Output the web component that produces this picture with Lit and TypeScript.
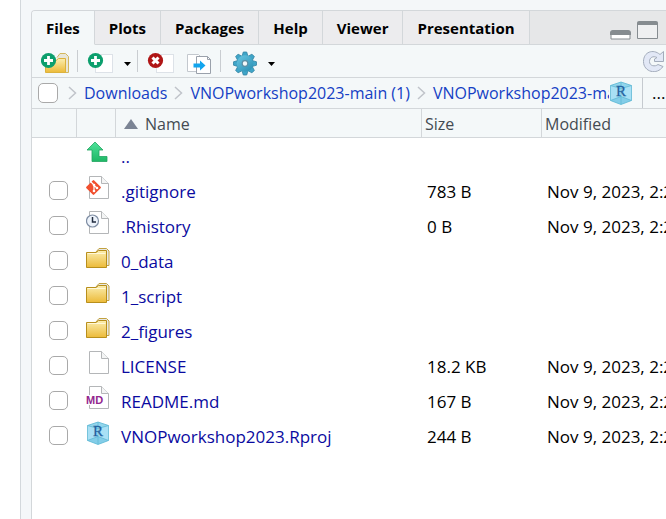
import { LitElement, html, css, svg, nothing } from "lit";
import { customElement, state } from "lit/decorators.js";
import { classMap } from "lit/directives/class-map.js";

type Kind = "git" | "history" | "folder" | "file" | "markdown" | "project";

interface Entry {
  name: string;
  kind: Kind;
  size?: string;
  modified?: string;
}

const STAMP = "Nov 9, 2023, 2:22";

const ENTRIES: Entry[] = [
  { name: ".gitignore", kind: "git", size: "783 B", modified: STAMP },
  { name: ".Rhistory", kind: "history", size: "0 B", modified: STAMP },
  { name: "0_data", kind: "folder" },
  { name: "1_script", kind: "folder" },
  { name: "2_figures", kind: "folder" },
  { name: "LICENSE", kind: "file", size: "18.2 KB", modified: STAMP },
  { name: "README.md", kind: "markdown", size: "167 B", modified: STAMP },
  { name: "VNOPworkshop2023.Rproj", kind: "project", size: "244 B", modified: STAMP },
];

const TABS = ["Files", "Plots", "Packages", "Help", "Viewer", "Presentation"];
const CRUMBS = ["Downloads", "VNOPworkshop2023-main (1)", "VNOPworkshop2023-main"];

const defs = svg`<defs>
  <linearGradient id="gold" x1="0" y1="0" x2="0" y2="1">
    <stop offset="0" stop-color="#fbeeb0"/><stop offset="1" stop-color="#ecba38"/>
  </linearGradient>
  <linearGradient id="leaf" x1="0" y1="0" x2="0" y2="1">
    <stop offset="0" stop-color="#4ee29a"/><stop offset="1" stop-color="#1fb766"/>
  </linearGradient>
</defs>`;

const page = svg`
  <path d="M3.5 .5H15.5L22.5 7.5V22.5H3.5Z" fill="#fff" stroke="#b4b6b8"/>
  <path d="M15.5 .5V7.5H22.5" fill="#f4f5f5" stroke="#b4b6b8"/>`;

const cube = svg`
  <path d="M12 1L22.5 4.5V19.5L12 23.5L1.5 19.5V4.5Z" fill="#a9e0f5"/>
  <path d="M12 1L22.5 4.5L12 7.5L1.5 4.5Z" fill="#92d5ec"/>
  <path d="M1.5 19.5L12 15.5L22.5 19.5L12 23.5Z" fill="#83cde8"/>
  <path d="M12 1L22.5 4.5V19.5L12 23.5L1.5 19.5V4.5ZM1.5 4.5L12 7.5L22.5 4.5M12 1V23M1.5 19.5L12 15.5L22.5 19.5" fill="none" stroke="#5fb9d4" stroke-width=".8"/>
  <text x="12" y="15" text-anchor="middle" font-family="Liberation Serif, serif" font-size="15" fill="#23619e" stroke="#23619e" stroke-width=".3">R</text>`;

const folder = svg`${defs}
  <path d="M9.5 6.5L13 2.5H20.5L23 5V19.5H20" fill="#e6e8e6" stroke="#c3a23f"/>
  <path d="M.5 6.5H10L12.5 4.5H20.5V21.5H.5Z" fill="url(#gold)" stroke="#b88f1c"/>
  <path d="M1.5 7.5H19.5" stroke="#fff8d8" />`;

const glyphs: Record<Kind, unknown> = {
  file: page,
  folder,
  project: cube,
  git: svg`${page}
    <rect x="2" y="6" width="11" height="11" rx="1" transform="rotate(45 7.5 11.5)" fill="#f1502f"/>
    <path d="M5 6L8 9V15M8 9.5L11 12" fill="none" stroke="#fff" stroke-width="1.2"/>
    <circle cx="8" cy="9" r="1.3" fill="#fff"/><circle cx="8" cy="15" r="1.3" fill="#fff"/><circle cx="11" cy="12" r="1.3" fill="#fff"/>`,
  history: svg`${page}
    <circle cx="6.5" cy="10" r="6" fill="#edf3fb" stroke="#7e8da3" stroke-width="1.2"/>
    <path d="M6.5 6V11H10" fill="none" stroke="#222d40" stroke-width="1.5"/>`,
  markdown: svg`${page}
    <rect x="0" y="9" width="17" height="10" fill="#fff"/>
    <text x="0" y="18" font-family="Liberation Sans, sans-serif" font-weight="700" font-size="11" fill="#93278f">MD</text>`,
};

const icon = (w: number, h: number, body: unknown) =>
  html`<svg width=${w} height=${h} viewBox="0 0 ${w} ${h}" aria-hidden="true">${body}</svg>`;

const plus = (cx: number) => svg`
  <circle cx=${cx} cy="15.5" r="7.6" fill="#0c9f6d"/>
  <path d="M${cx - 4.5} 15.5H${cx + 4.5}M${cx} 11V20" stroke="#fff" stroke-width="2.8"/>`;

const newFolder = svg`${defs}
  <path d="M16 12.5L19 8.5H24.5L27.5 11.5V27.5H24" fill="#e8e6d8" stroke="#d3b75e"/>
  <path d="M4.5 15.5H15L17.5 13.5H24.5V27.5H4.5Z" fill="url(#gold)" stroke="#dcb23c"/>
  ${plus(7.5)}`;

const newFile = svg`
  <rect x="11.5" y="9.5" width="17" height="18" fill="#fff" stroke="#dde2e8"/>${plus(11.5)}`;

const remove = svg`
  <rect x="12.5" y="9.5" width="17" height="18" fill="#fff" stroke="#dde2e8"/>
  <circle cx="11.5" cy="15.5" r="7.6" fill="#b01616"/>
  <path d="M8.5 12.5L14.5 18.5M14.5 12.5L8.5 18.5" stroke="#fff" stroke-width="3"/>`;

const copyTo = svg`
  <path d="M1.5 9.5H12.5L15.5 12.5V26.5H1.5Z" fill="#fff" stroke="#c3c8ce"/>
  <path d="M10.5 11.5H21.5L24.5 14.5V28.5H10.5Z" fill="#fff" stroke="#9aa1ab"/>
  <path d="M21.5 11.5V14.5H24.5" fill="none" stroke="#9aa1ab"/>
  <path d="M7.5 18.5H14V15.5L19.5 20.5L14 25.5V22.5H7.5Z" fill="#12a5ee"/>`;

const TEETH = [0, 45, 90, 135, 180, 225, 270, 315];
const gear = svg`
  <defs><linearGradient id="teal" gradientUnits="userSpaceOnUse" x1="10" y1="8" x2="26" y2="29">
    <stop offset="0" stop-color="#6fcbe6"/><stop offset="1" stop-color="#2389ae"/>
  </linearGradient></defs>
  ${TEETH.map(
    (a) => svg`<path d="M14.8 12L16.3 7H19.7L21.2 12Z" transform="rotate(${a} 18 18.5)" fill="#3fa5c8" stroke="#3384a3" stroke-width=".8" stroke-linejoin="round"/>`
  )}
  <circle cx="18" cy="18.5" r="8.3" fill="url(#teal)"/>
  <circle cx="18" cy="18.5" r="2.8" fill="#f4f8f9" stroke="#5d8fa4" stroke-width="1.2"/>`;

const caret = svg`<path d="M0 17H7L3.5 21Z" fill="#000"/>`;

const refresh = svg`
  <path d="M20.5 1.5V11.5H11.5V9L14 7.5C10 5.5 6.5 7.5 6.5 11.5C6.5 16 12 17 15 14.5L20 16.5C14 25.5 .5 22 .5 11.5C.5 2 10 -1.5 17 4.5Z" fill="#e2e8f6" stroke="#a3acbb" stroke-linejoin="round"/>`;

const minimize = svg`<path d="M1 19V13Q1 11 3 11H18Q20 11 20 13V19Z" fill="#fff" stroke="#868c90" stroke-width="1"/>
  <path d="M0 15V13Q0 10 3 10H18Q21 10 21 13V15Z" fill="#868c90"/>`;

const maximize = svg`<path d="M.5 3V18.5H20.5V3Z" fill="#eff0f1" stroke="#868c90"/>
  <path d="M0 5V3Q0 1 2 1H19Q21 1 21 3V5Z" fill="#868c90"/>`;

const chevron = icon(9, 14, svg`<path d="M1 1L7.5 7L1 13" fill="none" stroke="#c0c4ca" stroke-width="1.5"/>`);

const upArrow = svg`${defs}
  <path d="M9 1L17 9H13V15.5H21V20.5H6V9H1Z" fill="url(#leaf)" stroke="#22a561" stroke-width=".8"/>`;

@customElement("app-root")
export class AppRoot extends LitElement {
  @state() private tab = "Files";
  @state() private selected = new Set<string>();

  static styles = css`
    :host {
      display: flex;
      min-height: 100vh;
      overflow: hidden;
      background: #fff;
      color: #000;
      font: 17px/24px "Open Sans", "Noto Sans", sans-serif;
      padding-left: 20px;
      box-sizing: border-box;
    }
    * { box-sizing: border-box; }
    svg { display: block; }
    a { text-decoration: none; }
    button {
      font: inherit;
      color: inherit;
      background: none;
      border: 0;
      padding: 0;
      margin: 0;
      flex: none;
    }
    .workspace {
      flex: 1;
      min-width: 0;
      display: flex;
      padding: 10px 0 0 10px;
      background: #f4f7f9;
      border-left: 1px solid #d3d8dc;
    }
    .pane {
      flex: 1;
      min-width: 0;
      background: #fff;
      border: 1px solid #d3d7da;
      border-width: 1px 0 0 1px;
      border-top-left-radius: 4px;
      overflow: hidden;
    }
    .tabs {
      display: flex;
      height: 34px;
      background: #e6e7e8;
    }
    .tab {
      padding: 0 14px;
      font-size: 15px;
      font-weight: 700;
      background: #ececee;
      border: solid #d3d7da;
      border-width: 0 1px 1px 0;
    }
    .tab.active { background: #f4f8f9; border-bottom-color: #f4f8f9; }
    .window {
      flex: 1;
      display: flex;
      justify-content: flex-end;
      align-items: flex-start;
      gap: 6px;
      padding: 9px 8px 0 0;
      border-bottom: 1px solid #d3d7da;
    }
    .toolbar, .path {
      display: flex;
      align-items: center;
      background: #f4f8f9;
      border-bottom: 1px solid #d3d7da;
    }
    .toolbar { height: 33px; gap: 6px; padding-left: 9px; }
    .sep {
      width: 1px;
      height: 22px;
      background: #c9cdd1;
    }
    .end { margin-left: auto; padding-right: 1px; }
    .path { height: 31px; padding-left: 6px; }
    .crumbs {
      flex: 1;
      min-width: 0;
      display: flex;
      align-items: center;
      gap: 7px;
      overflow: hidden;
      white-space: nowrap;
      padding-left: 10px;
      font-size: 16px;
      color: #1540c4;
    }
    .crumbs a { color: inherit; }
    .crumbs svg { flex: none; }
    .project { padding-right: 9px; }
    .more {
      align-self: stretch;
      width: 24px;
      padding-left: 9px;
      text-align: left;
      border-left: 1px solid #c5cacf;
    }
    input {
      appearance: none;
      flex: none;
      display: block;
      width: 19px;
      height: 19px;
      margin: 0;
      background: #fff;
      border: 1px solid #a9a9a9;
      border-radius: 5px;
    }
    .path input { width: 20px; height: 20px; }
    input:checked { background: #3b78d8; }
    table {
      width: 100%;
      table-layout: fixed;
      border-collapse: separate;
      border-spacing: 0;
    }
    .c-check { width: 45px; }
    .c-icon { width: 39px; }
    .c-name { width: 306px; }
    .c-size { width: 120px; }
    th, td { padding: 0; text-align: left; white-space: nowrap; }
    th {
      height: 29px;
      padding: 2px 0 0 3px;
      font-size: 16px;
      font-weight: 400;
      color: #444b52;
      background: #f4f8f9;
      border: solid #d3d7da;
      border-width: 0 1px 1px 0;
    }
    th:last-child { border-right: 0; }
    .sort { display: flex; align-items: center; gap: 7px; padding-left: 5px; }
    td { height: 35px; padding: 2px 0 0 5px; vertical-align: middle; }
    td a { color: #0a0aa0; }
    .check { padding-left: 17px; padding-top: 0; }
    .glyph { padding: 3px 0 0 9px; vertical-align: top; }
  `;

  private toggle(name: string) {
    const next = new Set(this.selected);
    next.has(name) ? next.delete(name) : next.add(name);
    this.selected = next;
  }

  private row(e: Entry) {
    return html`<tr>
      <td class="check">
        <input type="checkbox" aria-label=${e.name} .checked=${this.selected.has(e.name)} @change=${() => this.toggle(e.name)} />
      </td>
      <td class="glyph">${icon(24, 24, glyphs[e.kind])}</td>
      <td><a href="#">${e.name}</a></td>
      <td>${e.size ?? nothing}</td>
      <td>${e.modified ?? nothing}</td>
    </tr>`;
  }

  render() {
    return html`<main class="workspace">
      <section class="pane">
        <div class="tabs" role="tablist">
          ${TABS.map(
            (t) => html`<button role="tab" class=${classMap({ tab: true, active: t === this.tab })}
              aria-selected=${t === this.tab} @click=${() => (this.tab = t)}>${t}</button>`
          )}
          <div class="window">
            <button aria-label="Minimize">${icon(21, 20, minimize)}</button>
            <button aria-label="Maximize">${icon(21, 20, maximize)}</button>
          </div>
        </div>
        <div class="toolbar">
          <button aria-label="New folder">${icon(30, 32, newFolder)}</button>
          <span class="sep"></span>
          <button aria-label="New blank file">${icon(34, 32, newFile)}</button>
          <button aria-label="File types">${icon(7, 32, caret)}</button>
          <span class="sep"></span>
          <button aria-label="Delete">${icon(36, 32, remove)}</button>
          <button aria-label="Copy">${icon(28, 32, copyTo)}</button>
          <span class="sep"></span>
          <button aria-label="More commands">${icon(35, 32, gear)}</button>
          <button aria-label="Open commands">${icon(7, 32, caret)}</button>
          <button class="end" aria-label="Refresh">${icon(22, 22, refresh)}</button>
        </div>
        <div class="path">
          <input type="checkbox" aria-label="Select all" />
          <nav class="crumbs">${CRUMBS.map((c) => html`${chevron}<a href="#">${c}</a>`)}</nav>
          <button class="project" aria-label="Project folder">${icon(24, 24, cube)}</button>
          <button class="more" aria-label="Go to directory">...</button>
        </div>
        <table>
          <colgroup>
            <col class="c-check" /><col class="c-icon" /><col class="c-name" /><col class="c-size" /><col />
          </colgroup>
          <thead>
            <tr>
              <th></th>
              <th></th>
              <th><button class="sort">${icon(14, 10, svg`<path d="M0 10L7 0L14 10Z" fill="#7b8494"/>`)}Name</button></th>
              <th><button>Size</button></th>
              <th><button>Modified</button></th>
            </tr>
          </thead>
          <tbody>
            <tr>
              <td></td>
              <td class="glyph">${icon(24, 24, upArrow)}</td>
              <td><a href="#">..</a></td>
              <td></td>
              <td></td>
            </tr>
            ${ENTRIES.map((e) => this.row(e))}
          </tbody>
        </table>
      </section>
    </main>`;
  }
}
